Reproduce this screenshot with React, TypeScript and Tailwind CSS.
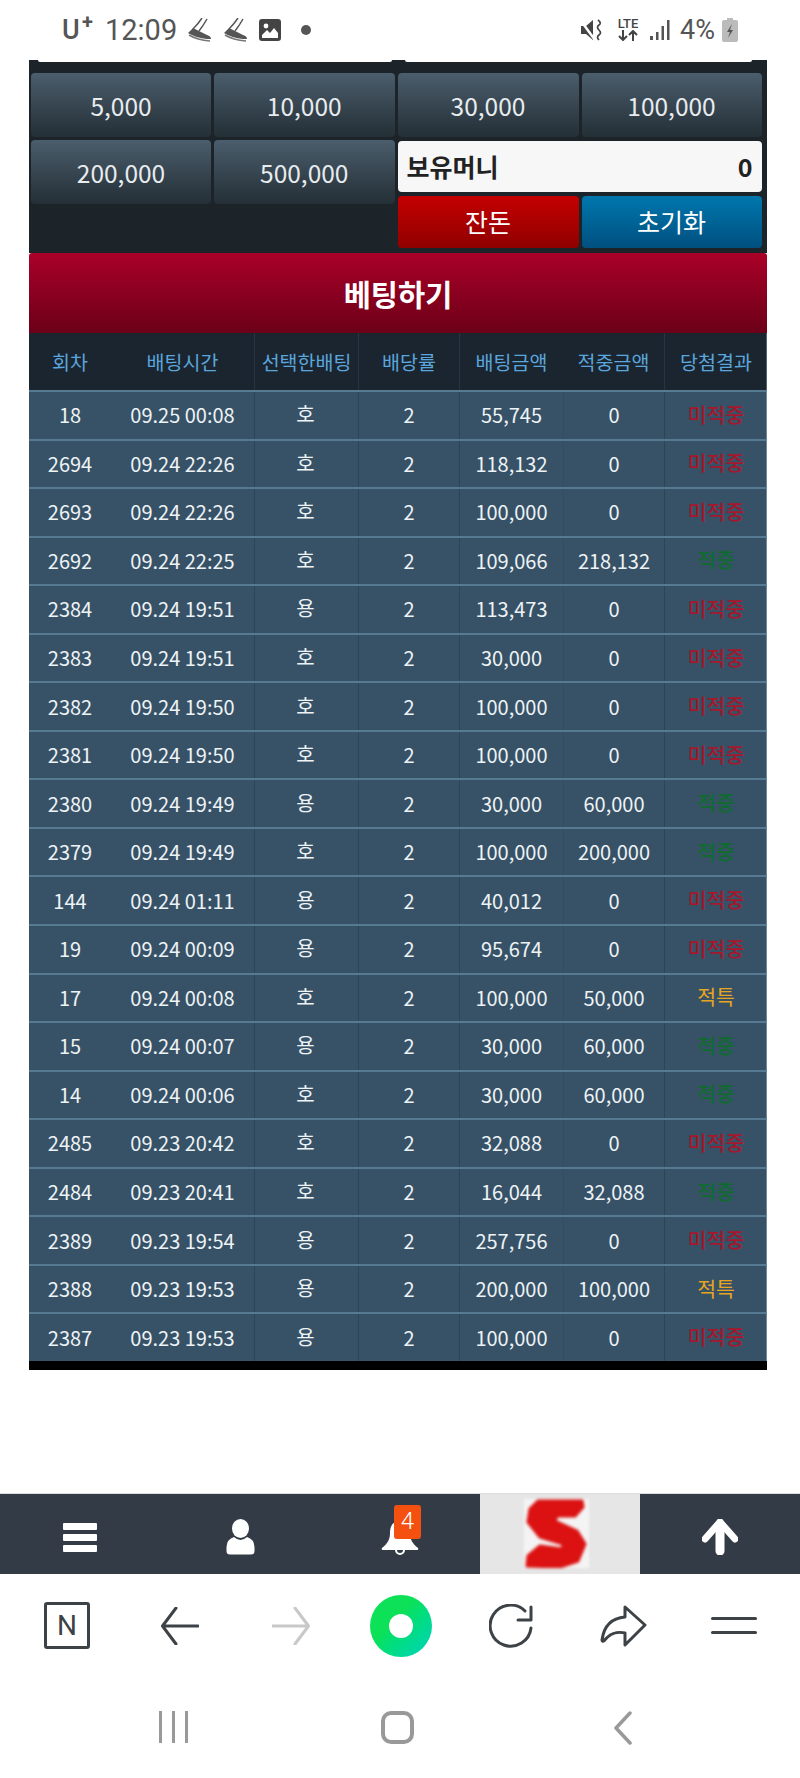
import React from "react";

const ko = "font-['Noto_Sans_CJK_KR','Noto_Sans',sans-serif]";

type Row = [string, string, string, string, string, string];
const rows: Row[] = [
  ["18", "09.25 00:08", "호", "55,745", "0", "미적중"],
  ["2694", "09.24 22:26", "호", "118,132", "0", "미적중"],
  ["2693", "09.24 22:26", "호", "100,000", "0", "미적중"],
  ["2692", "09.24 22:25", "호", "109,066", "218,132", "적중"],
  ["2384", "09.24 19:51", "용", "113,473", "0", "미적중"],
  ["2383", "09.24 19:51", "호", "30,000", "0", "미적중"],
  ["2382", "09.24 19:50", "호", "100,000", "0", "미적중"],
  ["2381", "09.24 19:50", "호", "100,000", "0", "미적중"],
  ["2380", "09.24 19:49", "용", "30,000", "60,000", "적중"],
  ["2379", "09.24 19:49", "호", "100,000", "200,000", "적중"],
  ["144", "09.24 01:11", "용", "40,012", "0", "미적중"],
  ["19", "09.24 00:09", "용", "95,674", "0", "미적중"],
  ["17", "09.24 00:08", "호", "100,000", "50,000", "적특"],
  ["15", "09.24 00:07", "용", "30,000", "60,000", "적중"],
  ["14", "09.24 00:06", "호", "30,000", "60,000", "적중"],
  ["2485", "09.23 20:42", "호", "32,088", "0", "미적중"],
  ["2484", "09.23 20:41", "호", "16,044", "32,088", "적중"],
  ["2389", "09.23 19:54", "용", "257,756", "0", "미적중"],
  ["2388", "09.23 19:53", "용", "200,000", "100,000", "적특"],
  ["2387", "09.23 19:53", "용", "100,000", "0", "미적중"],
];

const cols = "grid grid-cols-[82px_143px_104px_101px_104px_101px_103px]";

function Shoe() {
  return (
    <svg width="23" height="24" viewBox="0 0 23 24" fill="none">
      <path d="M14 0 Q10 6 5 11 M19 1 Q15 8 11 13" stroke="#555" strokeWidth="1.5" />
      <path d="M0 15 L5 10 L11 13 L19 17 Q23 18 23 21 L19 21 Q8 20 0 15 Z" fill="#555" />
      <path d="M1 17 Q9 22 22 23" stroke="#777" strokeWidth="1.6" />
    </svg>
  );
}

function StatusBar() {
  return (
    <div className="h-[60px] flex items-center justify-between text-[#555] font-['Roboto',sans-serif]">
      <div className="flex items-center ml-[62px]">
        <span className="text-[27px] font-medium leading-none w-[43px] relative">
          U<span className="absolute left-[20px] top-[-5px] text-[20px] font-bold">+</span>
        </span>
        <span className="text-[29px] leading-none w-[83px]">12:09</span>
        <Shoe />
        <span className="w-[13px]" />
        <Shoe />
        <svg className="ml-[12px]" width="22" height="22" viewBox="0 0 22 22">
          <rect x="0" y="0" width="22" height="22" rx="3" fill="#444" />
          <circle cx="7" cy="7" r="2.4" fill="#fff" />
          <path d="M3 19 V16 L8 11 L11 14 L15 9 L19 14 V19 Z" fill="#fff" />
        </svg>
        <span className="w-[10px] h-[10px] rounded-full bg-[#555] ml-[20px]" />
      </div>
      <div className="flex items-center mr-[62px]">
        <svg width="22" height="22" viewBox="0 0 22 22">
          <path d="M0 7 H5 L12 1 V21 L5 15 H0 Z" fill="#444" />
          <path d="M0 2 L14 21" stroke="#fff" strokeWidth="2.5" />
          <path d="M17 1 q4 3 1 5 q-3 2 0 5 q3 3 0 5 q-3 2 0 5" stroke="#444" strokeWidth="1.7" fill="none" />
        </svg>
        <div className="ml-[12px] w-[26px] flex flex-col items-center text-[#444]">
          <span className="text-[13px] font-medium leading-[12px] mt-[-1px]">LTE</span>
          <svg width="22" height="11" viewBox="0 0 22 11" fill="none" stroke="#444" strokeWidth="2">
            <path d="M6 0 V10 M2 6 L6 10 L10 6 M16 11 V1 M12 5 L16 1 L20 5" />
          </svg>
        </div>
        <svg className="ml-[9px]" width="20" height="22" viewBox="0 0 20 22">
          <rect x="0" y="17" width="3" height="4" fill="#555" />
          <rect x="6" y="13" width="2.5" height="8" fill="#555" />
          <rect x="11.5" y="7" width="2.5" height="14" fill="#555" />
          <rect x="17" y="1" width="2.5" height="20" fill="#555" />
        </svg>
        <span className="text-[27px] leading-none ml-[10px] w-[42px]">4%</span>
        <svg width="16" height="24" viewBox="0 0 16 24">
          <rect x="5" y="0" width="6" height="3" fill="#bbb" />
          <rect x="0" y="2" width="16" height="22" rx="2" fill="#bbb" />
          <path d="M10 6 L5 14 H8 L6 20 L11 12 H8 Z" fill="#555" />
        </svg>
      </div>
    </div>
  );
}

function Amount({ children }: { children: string }) {
  return (
    <button className={`h-[64px] pt-[2px] rounded-[4px] bg-gradient-to-b from-[#4b5e6d] to-[#242f36] text-[#e8ecef] text-[24.5px] ${ko}`}>
      {children}
    </button>
  );
}

function Result({ value }: { value: string }) {
  const color = value === "미적중" ? "text-[#a5182c]" : value === "적중" ? "text-[#0f6b2e]" : "text-[#e6a51e]";
  return <span className={`text-[20.5px] ${color} ${value === "적특" ? "" : "font-medium"}`}>{value}</span>;
}

function Betting() {
  return (
    <div className={`w-[738px] ml-[29px] ${ko}`}>
      <div className="bg-[#1c2329] h-[193px]">
        <div className="flex h-[13px] px-[9px] gap-[13px]">
          <div className="w-[354px] h-[2px] bg-white rounded-b-[2px]" />
          <div className="w-[347px] h-[2px] bg-white rounded-b-[2px]" />
        </div>
        <div className="grid grid-cols-[180px_180.5px_181px_180px] gap-x-[3px] gap-y-[3px] pl-[2px] w-[735px]">
          <Amount>5,000</Amount>
          <Amount>10,000</Amount>
          <Amount>30,000</Amount>
          <Amount>100,000</Amount>
          <Amount>200,000</Amount>
          <Amount>500,000</Amount>
          <div className="col-span-2 row-span-2 flex flex-col">
            <div className="h-[51px] mt-[1px] rounded-[4px] bg-[#f7f7f7] flex items-center justify-between px-[9px] text-[#222] font-bold">
              <span className="text-[25px]">보유머니</span>
              <span className="text-[25px]">0</span>
            </div>
            <div className="grid grid-cols-[181px_180px] gap-[3px] mt-[4px]">
              <button className="h-[52px] rounded-[4px] bg-gradient-to-b from-[#c40000] to-[#900000] text-[#fff] text-[25px]">잔돈</button>
              <button className="h-[52px] rounded-[4px] bg-gradient-to-b from-[#0077ae] to-[#00507f] text-[#fff] text-[25px]">초기화</button>
            </div>
          </div>
        </div>
      </div>
      <div className="h-[80px] bg-gradient-to-b from-[#aa0028] to-[#6c0018] rounded-t-[3px] flex items-center justify-center text-white text-[29.5px] font-bold">
        베팅하기
      </div>
      <div className={`${cols} h-[57px] bg-[#1a2530] text-[#5ba6dc] text-[19.5px] border-r border-[#50646f]`}>
        {["회차", "배팅시간", "선택한배팅", "배당률", "배팅금액", "적중금액", "당첨결과"].map((h, i) => (
          <div key={h} className={`flex items-center justify-center whitespace-nowrap ${i === 2 || i === 3 || i === 4 || i === 6 ? "border-l border-[#263443]" : ""}`}>
            {h}
          </div>
        ))}
      </div>
      {rows.map((r, idx) => (
        <div key={idx} className={`${cols} h-[48.55px] bg-[#375267] border-t-2 border-[#557a91] text-[#eef3f6] text-[20px] border-r-[1px] border-r-[#6f8a9a]`}>
          <div className="flex items-center justify-center">{r[0]}</div>
          <div className="flex items-center justify-center whitespace-nowrap">{r[1]}</div>
          <div className="flex items-center justify-center border-l border-[#2b4558]"><span className="-translate-y-[1px] -translate-x-[1px]">{r[2]}</span></div>
          <div className="flex items-center justify-center border-l border-[#2b4558]">2</div>
          <div className="flex items-center justify-center border-l border-[#2b4558]">{r[3]}</div>
          <div className="flex items-center justify-center border-l border-[#324d61]">{r[4]}</div>
          <div className="flex items-center justify-center border-l border-[#2b4558]"><span className="-translate-y-[1px]"><Result value={r[5]} /></span></div>
        </div>
      ))}
      <div className="h-[9px] bg-black" />
    </div>
  );
}

function BottomNav() {
  return (
    <div className="grid grid-cols-5 h-[81px] bg-[#333c46] border-t border-[#ddd]">
      <div className="flex items-center justify-center pt-[7px]">
        <div className="flex flex-col gap-[4px] w-[34px]">
          <span className="h-[7px] rounded-[1px] bg-white" />
          <span className="h-[7px] rounded-[1px] bg-white" />
          <span className="h-[7px] rounded-[1px] bg-white" />
        </div>
      </div>
      <div className="flex items-center justify-center pt-[7px]">
        <svg width="29" height="36" viewBox="0 0 29 36">
          <ellipse cx="14.5" cy="9.5" rx="8.5" ry="9.5" fill="#fff" />
          <path d="M8 18 Q14.5 24 21 18 Q28 20 28.5 28 V32 Q28.5 35.5 25 35.5 H4 Q0.5 35.5 0.5 32 V28 Q1 20 8 18 Z" fill="#fff" />
        </svg>
      </div>
      <div className="flex items-center justify-center relative pt-[7px]">
        <svg width="38" height="36" viewBox="0 0 38 36">
          <path d="M19 2 C11 2 9 8 9 14 C9 21 6 25 1 29 Q0 31 2 31 H36 Q38 31 37 29 C32 25 29 21 29 14 C29 8 27 2 19 2 Z" fill="#fff" />
          <path d="M15 31 a4 4 0 0 0 8 0" fill="#333c46" stroke="#fff" strokeWidth="2" />
        </svg>
        <span className="absolute left-[74px] top-[11px] w-[27px] h-[34px] rounded-[3px] bg-[#f4500f] text-white text-[24px] leading-[32px] text-center font-['Roboto',sans-serif] font-light">4</span>
      </div>
      <div className="bg-[#e6e6e6] flex items-center pl-[44px]">
        <svg className="blur-[1.5px]" width="65" height="69" viewBox="0 0 65 69">
          <rect x="0" y="0" width="65" height="69" fill="#f4f4f4" />
          <path d="M14 2 H58 L59 8 L51 17 H33 L31 22 L53 32 L61 45 L54 62 L36 68 L3 67 L4 57 L16 47 L38 50 L39 45 L16 38 L4 23 L6 10 Z" fill="#dc1212" strokeLinejoin="round" stroke="#dc1212" strokeWidth="3" />
        </svg>
      </div>
      <div className="flex items-center justify-center pt-[7px]">
        <svg width="36" height="36" viewBox="0 0 36 36">
          <path d="M18 3 L33 20" stroke="#fff" strokeWidth="7" strokeLinecap="round" />
          <path d="M18 3 L3 20" stroke="#fff" strokeWidth="7" strokeLinecap="round" />
          <path d="M18 6 V32" stroke="#fff" strokeWidth="9" strokeLinecap="round" />
        </svg>
      </div>
    </div>
  );
}

function BrowserBar() {
  const stroke = "#3d4246";
  return (
    <div className="h-[104px] flex items-center">
      <div className="ml-[44px] w-[46px] h-[47px] border-[3px] border-[#3d4246] rounded-[3px] flex items-center justify-center text-[28px] leading-none text-[#3d4246] font-['Roboto',sans-serif]">N</div>
      <svg className="ml-[71px]" width="38" height="38" viewBox="0 0 38 38">
        <path d="M37 19 H2 M15 1 L1.5 19 L15 37" fill="none" stroke={stroke} strokeWidth="3" strokeLinecap="round" strokeLinejoin="round" />
      </svg>
      <svg className="ml-[73px]" width="38" height="38" viewBox="0 0 38 38">
        <path d="M1 19 H36 M23 1 L36.5 19 L23 37" fill="none" stroke="#c8c8c8" strokeWidth="3" strokeLinecap="round" strokeLinejoin="round" />
      </svg>
      <div className="ml-[60px] w-[62px] h-[62px] rounded-full bg-gradient-to-br from-[#0ce158] from-40% to-[#02d2ba] flex items-center justify-center">
        <div className="w-[24px] h-[24px] rounded-full bg-white" />
      </div>
      <svg className="ml-[57px]" width="44" height="44" viewBox="0 0 44 44">
        <path d="M36 7 A20.5 20.5 0 1 0 42 24" fill="none" stroke={stroke} strokeWidth="3" strokeLinecap="round" />
        <path d="M42 3 V16 H29" fill="none" stroke={stroke} strokeWidth="3" strokeLinecap="round" strokeLinejoin="round" />
      </svg>
      <svg className="ml-[67px]" width="47" height="42" viewBox="0 0 47 42">
        <path d="M2 35 C4 20 13 13 25 12 L25 2 L45 20 L25 40 L25 28 C17 26 9 29 4 36 Q2 37 2 35 Z" fill="none" stroke={stroke} strokeWidth="3" strokeLinejoin="round" />
      </svg>
      <div className="ml-[64px] w-[46px] flex flex-col gap-[11px]">
        <span className="h-[3px] rounded-full bg-[#3d4246]" />
        <span className="h-[3px] rounded-full bg-[#3d4246]" />
      </div>
    </div>
  );
}

function SystemNav() {
  return (
    <div className="flex-1 flex items-start pt-[33px]">
      <div className="ml-[159px] flex gap-[10px] h-[32px]">
        <span className="w-[3px] bg-[#999]" />
        <span className="w-[3px] bg-[#999]" />
        <span className="w-[3px] bg-[#999]" />
      </div>
      <div className="ml-[193px] w-[33px] h-[33px] rounded-[10px] border-[4px] border-[#999]" />
      <svg className="ml-[199px]" width="20" height="34" viewBox="0 0 20 34">
        <path d="M17 2 L3 17 L17 32" fill="none" stroke="#999" strokeWidth="3.5" strokeLinecap="round" strokeLinejoin="round" />
      </svg>
    </div>
  );
}

export default function App() {
  return (
    <div className="w-[800px] h-[1778px] bg-white flex flex-col overflow-hidden">
      <StatusBar />
      <Betting />
      <div className="h-[123px]" />
      <BottomNav />
      <BrowserBar />
      <SystemNav />
    </div>
  );
}
